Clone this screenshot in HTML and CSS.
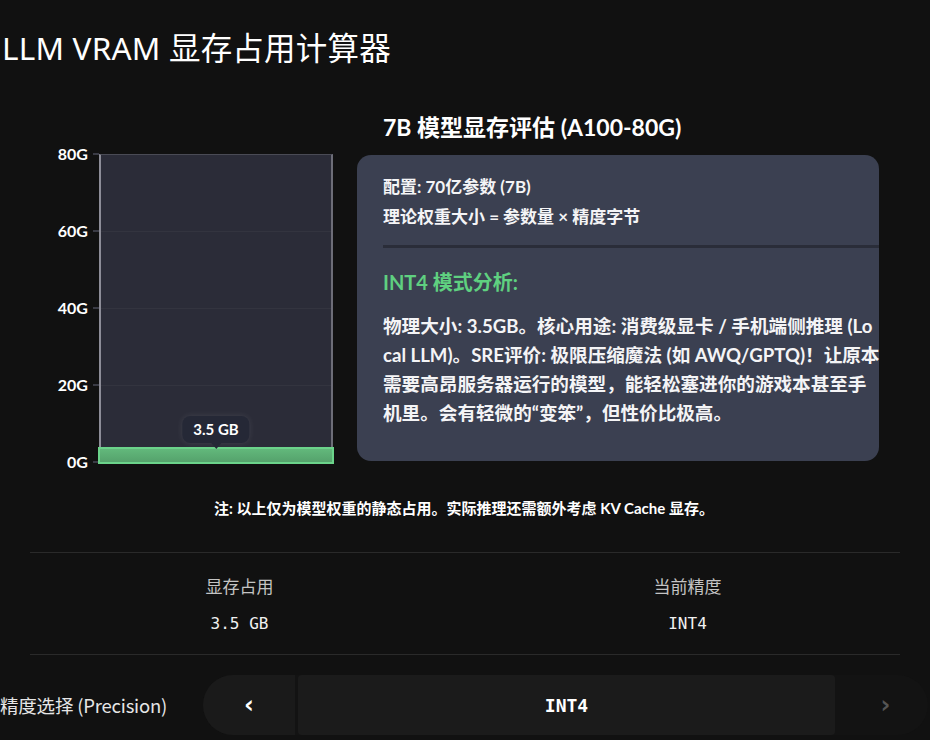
FILE: index.html
```html
<!DOCTYPE html>
<html lang="zh-CN">
<head>
<meta charset="utf-8">
<title>LLM VRAM 显存占用计算器</title>
<link rel="stylesheet" href="styles.css">
</head>
<body>
<h1 class="title">LLM VRAM 显存占用计算器</h1>

<section class="main">
  <div class="chart">
    <div class="axis">
      <div class="tick"><span>80G</span><i></i></div>
      <div class="tick"><span>60G</span><i></i></div>
      <div class="tick"><span>40G</span><i></i></div>
      <div class="tick"><span>20G</span><i></i></div>
      <div class="tick"><span>0G</span><i></i></div>
    </div>
    <div class="plot">
      <div class="grid"><div></div><div></div><div></div><div></div></div>
      <div class="bar" style="height: 5.5%;">
        <div class="tip">3.5 GB</div>
      </div>
    </div>
  </div>

  <div class="info">
    <h2 class="info-title">7B 模型显存评估 (A100-80G)</h2>
    <div class="card">
      <p class="line">配置: 70亿参数 (7B)</p>
      <p class="line">理论权重大小 = 参数量 × 精度字节</p>
      <hr class="card-rule">
      <h3 class="mode">INT4 模式分析:</h3>
      <p class="desc">物理大小: 3.5GB。核心用途: 消费级显卡 / 手机端侧推理 (Lo<br>cal LLM)。SRE评价: 极限压缩魔法 (如 AWQ/GPTQ)！让原本<br>需要高昂服务器运行的模型，能轻松塞进你的游戏本甚至手<br>机里。会有轻微的“变笨”，但性价比极高。</p>
    </div>
  </div>
</section>

<p class="note">注: 以上仅为模型权重的静态占用。实际推理还需额外考虑 KV Cache 显存。</p>

<section class="stats">
  <div class="stat">
    <div class="stat-label">显存占用</div>
    <div class="stat-value">3.5 GB</div>
  </div>
  <div class="stat">
    <div class="stat-label">当前精度</div>
    <div class="stat-value">INT4</div>
  </div>
</section>

<section class="picker">
  <div class="picker-label">精度选择 (Precision)</div>
  <div class="stepper">
    <button class="step prev">‹</button>
    <div class="current">INT4</div>
    <button class="step next">›</button>
  </div>
</section>
</body>
</html>
```

FILE: styles.css
```css
* { box-sizing: border-box; }

html, body {
  margin: 0;
  padding: 0;
  background: #111111;
  color: #ffffff;
  width: 930px;
  height: 740px;
  overflow: hidden;
  font-family: "Lato", "Noto Sans CJK SC", sans-serif;
}

.title {
  margin: 0;
  padding: 30px 0 0 2px;
  font-family: "Noto Sans", "Noto Sans CJK SC", sans-serif;
  font-weight: 400;
  font-size: 31.5px;
  line-height: 36px;
  color: #ffffff;
  letter-spacing: 0.2px;
}

.main {
  display: flex;
  margin-top: 48px;
  padding-left: 44px;
}

.chart {
  display: flex;
  padding-top: 40px;
  width: 313px;
}

.axis {
  display: flex;
  flex-direction: column;
  justify-content: space-between;
  height: 324px;
  margin-top: -8px;
  width: 55px;
}

.tick {
  display: flex;
  align-items: center;
  justify-content: flex-end;
  height: 16px;
  font-size: 16px;
  font-weight: 700;
  line-height: 16px;
  color: #ffffff;
}

.tick i {
  display: block;
  width: 6px;
  height: 2px;
  margin-left: 5px;
  background: #3a3b45;
}

.plot {
  position: relative;
  width: 234px;
  height: 308px;
  background: #2b2c38;
  border-left: 2px solid #8d8d98;
  border-right: 2px solid #6d6d78;
  border-top: 1px solid #4a4b55;
}

.grid {
  display: flex;
  flex-direction: column;
  height: 100%;
}

.grid div {
  flex: 1;
  border-bottom: 1px solid #33343f;
}

.grid div:last-child { border-bottom: none; }

.bar {
  position: absolute;
  left: -3px;
  right: -3px;
  bottom: -2px;
  background: linear-gradient(#62b87b, #55a26c);
  border: 2px solid #6bd38a;
}

.tip {
  position: absolute;
  left: 50%;
  bottom: 100%;
  margin-bottom: 6px;
  transform: translateX(-50%);
  background: #252836;
  border-radius: 8px;
  padding: 0 11px;
  height: 27px;
  line-height: 27px;
  font-size: 15px;
  font-weight: 700;
  color: #ffffff;
  white-space: nowrap;
  box-shadow: 0 0 6px rgba(255, 255, 255, 0.1);
}

.tip::after {
  content: "";
  position: absolute;
  left: 50%;
  top: 100%;
  margin-left: -5px;
  border-left: 5px solid transparent;
  border-right: 5px solid transparent;
  border-top: 6px solid #252836;
}

.info {
  width: 522px;
}

.info-title {
  margin: 0 0 15px 26px;
  font-size: 23px;
  font-weight: 700;
  line-height: 26px;
  color: #ffffff;
}

.card {
  background: #3b4051;
  border-radius: 14px;
  height: 306px;
  padding: 17px 0 0 26px;
}

.line {
  margin: 0;
  font-size: 17px;
  font-weight: 700;
  line-height: 30px;
  color: #f4f4f6;
}

.card-rule {
  margin: 13px 0 0 0;
  border: none;
  height: 3px;
  background: #2a2d39;
}

.mode {
  margin: 22px 0 0 0;
  font-size: 20px;
  font-weight: 700;
  line-height: 24px;
  color: #5fd080;
}

.desc {
  margin: 18px 0 0 0;
  font-size: 18.6px;
  font-weight: 700;
  line-height: 29px;
  color: #f4f4f6;
  white-space: nowrap;
}

.note {
  margin: 28px 0 0 0;
  text-align: center;
  padding-right: 2px;
  font-size: 15px;
  font-weight: 700;
  line-height: 20px;
  color: #ffffff;
}

.stats {
  display: grid;
  grid-template-columns: 1fr 1fr;
  margin: 34px 30px 0 30px;
  border-top: 1px solid #2a2a2a;
  border-bottom: 1px solid #2a2a2a;
  height: 103px;
  padding-top: 20px;
}

.stat {
  text-align: center;
}

.stat:first-child { padding-right: 16px; }
.stat:last-child { padding-left: 10px; }

.stat-label {
  font-family: "Noto Sans CJK SC", sans-serif;
  font-size: 17px;
  line-height: 26px;
  color: #c4c4c4;
}

.stat-value {
  margin-top: 15px;
  font-family: "DejaVu Sans Mono", monospace;
  font-size: 16px;
  line-height: 20px;
  color: #f0f0f0;
}

.picker {
  display: flex;
  align-items: center;
  margin-top: 20px;
}

.picker-label {
  width: 203px;
  font-family: "Noto Sans CJK SC", sans-serif;
  font-size: 18.5px;
  color: #e6e6e6;
  letter-spacing: -0.2px;
}

.stepper {
  display: flex;
  width: 725px;
  height: 60px;
  background: #131313;
  border-radius: 30px;
}

.step {
  border: none;
  background: transparent;
  font-family: "DejaVu Sans", sans-serif;
  font-size: 24px;
  font-weight: 700;
  padding: 0;
  cursor: pointer;
}

.prev {
  width: 92px;
  background: #1a1a1a;
  border-radius: 30px 0 0 30px;
  color: #ffffff;
}

.current {
  flex: 1;
  margin-left: 3px;
  background: #1b1b1b;
  border-radius: 4px;
  display: flex;
  align-items: center;
  justify-content: center;
  font-family: "DejaVu Sans Mono", monospace;
  font-size: 18px;
  font-weight: 700;
  color: #ffffff;
}

.next {
  width: 93px;
  padding-left: 8px;
  color: #555555;
}
```
